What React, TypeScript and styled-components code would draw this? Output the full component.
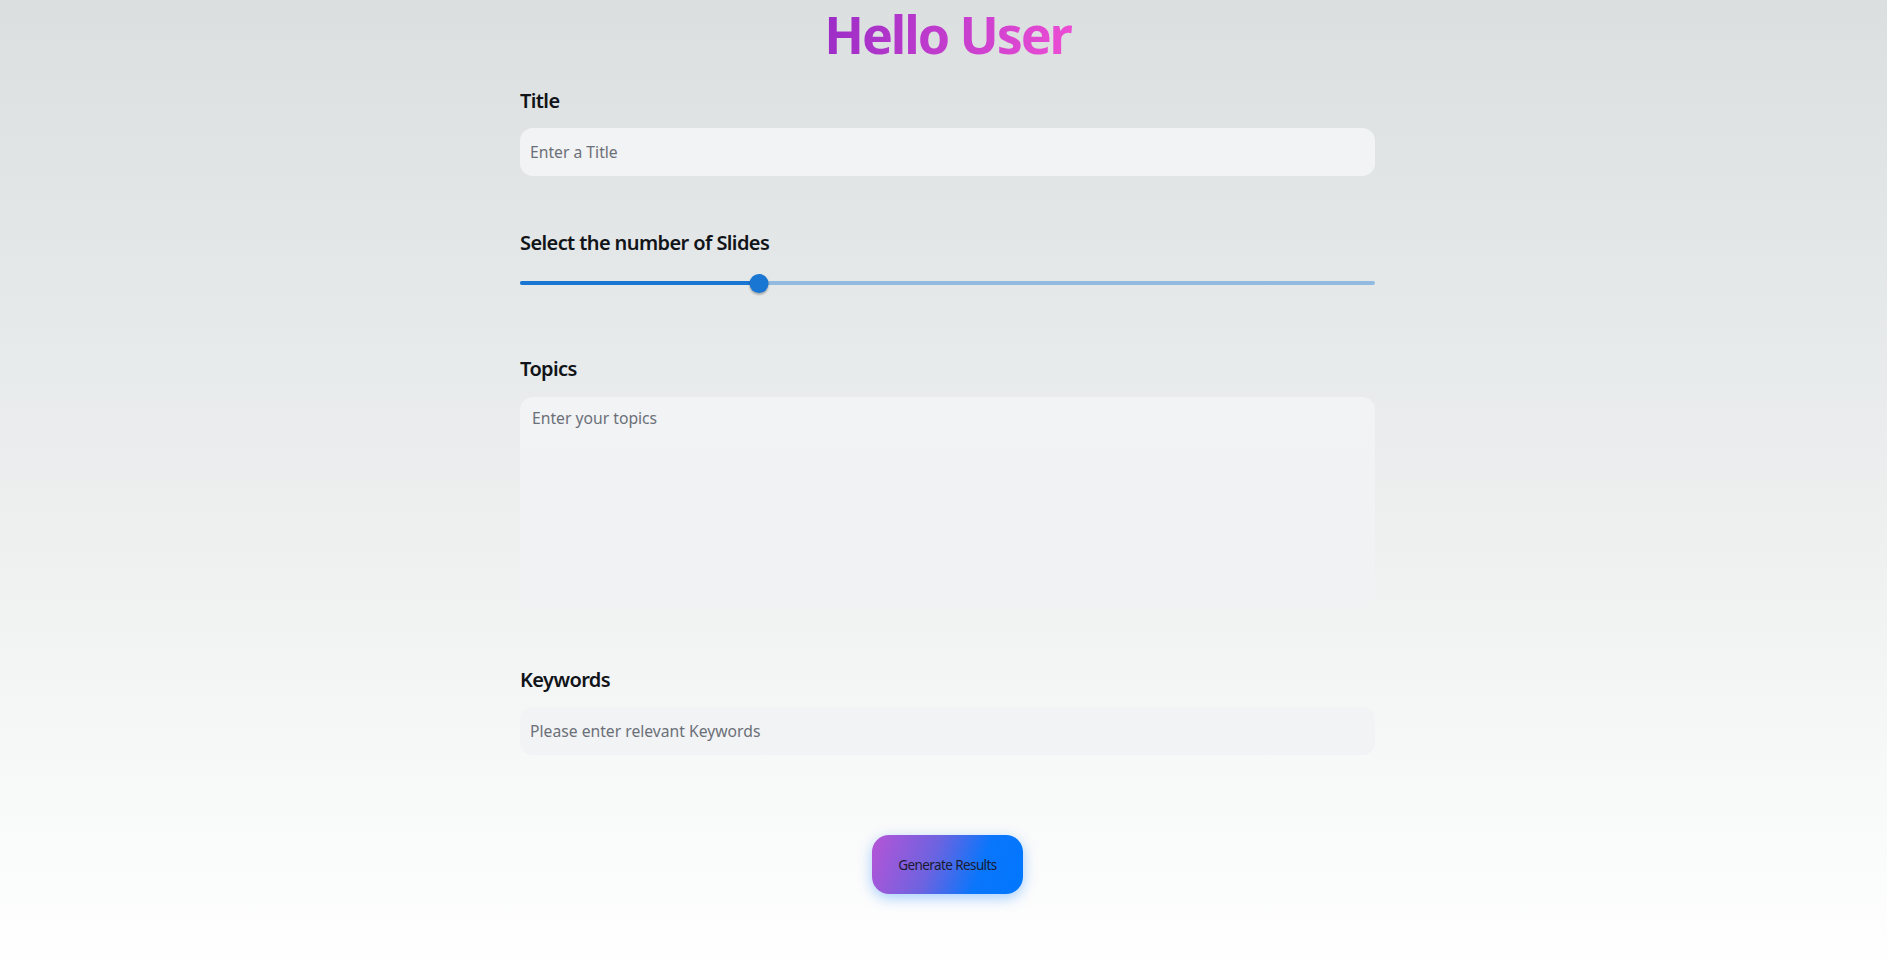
import React, { useState } from "react";
import styled, { createGlobalStyle } from "styled-components";

const Global = createGlobalStyle`
  html, body { margin: 0; padding: 0; }
  body {
    font-family: "Noto Sans", "Open Sans", "Liberation Sans", sans-serif;
    background: linear-gradient(to bottom, #dbdfe0 0%, #eef0f0 55%, #ffffff 100%);
    min-height: 100vh;
  }
  * { box-sizing: border-box; }
`;

const Page = styled.div`
  min-height: 973px;
  display: flex;
  justify-content: center;
  padding-left: 8px;
`;

const Form = styled.div`
  width: 855px;
  display: flex;
  flex-direction: column;
`;

const Heading = styled.h1`
  margin: 0;
  padding: 0 6px;
  align-self: center;
  font-size: 52px;
  font-weight: 700;
  letter-spacing: -2.1px;
  line-height: 68px;
  background: linear-gradient(100deg, #982cc6 0%, #c23ccd 50%, #f04fd4 100%);
  -webkit-background-clip: text;
  background-clip: text;
  color: transparent;
`;

const Section = styled.div<{ $gap: number }>`
  display: flex;
  flex-direction: column;
  margin-top: ${(p) => p.$gap}px;
`;

const Label = styled.label`
  font-size: 20px;
  font-weight: 600;
  color: #111418;
  letter-spacing: -0.6px;
  line-height: 28px;
`;

const Input = styled.input`
  margin-top: 13px;
  height: 48px;
  width: 100%;
  border: none;
  outline: none;
  border-radius: 13px;
  background: #f2f3f5;
  padding: 0 10px;
  font-family: inherit;
  font-size: 15.7px;
  color: #222;
  &::placeholder { color: #6b7078; }
`;

const TextArea = styled.textarea`
  margin-top: 14px;
  height: 214px;
  width: 100%;
  border: none;
  outline: none;
  resize: none;
  border-radius: 13px;
  background: linear-gradient(to bottom, #f2f3f5 0%, #f1f2f4 85%, #f1f2f2 100%);
  padding: 10px 12px;
  font-family: inherit;
  font-size: 15.7px;
  line-height: 22px;
  color: #222;
  &::placeholder { color: #6b7078; }
`;

const SliderWrap = styled.div`
  position: relative;
  margin-top: 16px;
  height: 20px;
  display: flex;
  align-items: center;
`;

const Rail = styled.div`
  width: 100%;
  height: 4px;
  border-radius: 2px;
  background: rgba(25, 118, 210, 0.4);
`;

const Track = styled.div`
  position: absolute;
  left: 0;
  height: 4px;
  border-radius: 2px;
  background: #1976d2;
`;

const Thumb = styled.div`
  position: absolute;
  width: 19px;
  height: 19px;
  border-radius: 50%;
  background: #1976d2;
  transform: translateX(-50%);
  box-shadow: 0 2px 2px rgba(0, 0, 0, 0.2), 0 1px 3px rgba(0, 0, 0, 0.12);
`;

const ButtonRow = styled.div`
  display: flex;
  justify-content: center;
  margin-top: 80px;
`;

const Button = styled.button`
  width: 151px;
  height: 59px;
  border: none;
  border-radius: 17px;
  background: linear-gradient(110deg, #b654d6 0%, #6d63e0 40%, #0a76fb 70%, #0077ff 100%);
  box-shadow: 0 4px 14px rgba(0, 119, 255, 0.35);
  font-family: "Noto Sans", sans-serif;
  font-size: 13.5px;
  letter-spacing: -0.6px;
  color: #1a1a33;
  cursor: pointer;
`;

export default function App() {
  const [pct] = useState(28);
  return (
    <>
      <Global />
      <Page>
        <Form>
          <Heading>Hello User</Heading>
          <Section $gap={19}>
            <Label>Title</Label>
            <Input placeholder="Enter a Title" />
          </Section>
          <Section $gap={53}>
            <Label>Select the number of Slides</Label>
            <SliderWrap>
              <Rail />
              <Track style={{ width: `${pct}%` }} />
              <Thumb style={{ left: `${pct}%` }} />
            </SliderWrap>
          </Section>
          <Section $gap={62}>
            <Label>Topics</Label>
            <TextArea placeholder="Enter your topics" />
          </Section>
          <Section $gap={55}>
            <Label>Keywords</Label>
            <Input placeholder="Please enter relevant Keywords" />
          </Section>
          <ButtonRow>
            <Button>Generate Results</Button>
          </ButtonRow>
        </Form>
      </Page>
    </>
  );
}
